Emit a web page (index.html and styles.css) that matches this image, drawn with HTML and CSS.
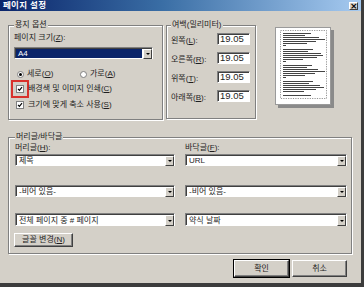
FILE: index.html
```html
<!DOCTYPE html>
<html lang="ko">
<head>
<meta charset="utf-8">
<title>페이지 설정</title>
<link rel="stylesheet" href="styles.css">
</head>
<body>
<div class="dialog">
  <div class="titlebar">
    <span class="title">페이지 설정</span>
    <span class="close">×</span>
  </div>
  <div class="main">
    <div class="top">
      <section class="group paper">
        <div class="gtitle">용지 옵션</div>
        <div class="lbl first">페이지 크기(<u>Z</u>):</div>
        <div class="select sel-a4"><span class="val">A4</span><span class="arrow"></span></div>
        <div class="radios">
          <label class="radio"><span class="rb on"></span><span>세로(<u>O</u>)</span></label>
          <label class="radio"><span class="rb"></span><span>가로(<u>A</u>)</span></label>
        </div>
        <label class="check check1"><span class="cb hl"><svg viewBox="0 0 8 8" width="6" height="6"><polyline points="1.3,3.8 3.2,5.8 6.7,1.6" fill="none" stroke="#000" stroke-width="1.5"/></svg></span><span>배경색 및 이미지 인쇄(<u>C</u>)</span></label>
        <label class="check check2"><span class="cb"><svg viewBox="0 0 8 8" width="6" height="6"><polyline points="1.3,3.8 3.2,5.8 6.7,1.6" fill="none" stroke="#000" stroke-width="1.5"/></svg></span><span>크기에 맞게 축소 사용(<u>S</u>)</span></label>
      </section>
      <section class="group margins">
        <div class="gtitle">여백(밀리미터)</div>
        <div class="mrows">
          <div class="mrow"><span>왼쪽(<u>L</u>):</span><span class="input">19.05</span></div>
          <div class="mrow"><span>오른쪽(<u>R</u>):</span><span class="input">19.05</span></div>
          <div class="mrow"><span>위쪽(<u>T</u>):</span><span class="input">19.05</span></div>
          <div class="mrow"><span>아래쪽(<u>B</u>):</span><span class="input">19.05</span></div>
        </div>
      </section>
      <div class="preview">
        <svg viewBox="0 0 56 78" width="56" height="78">
          <rect x="0.5" y="0.5" width="55" height="77" fill="#fff" stroke="#9a9a9a" stroke-width="1"/>
          <rect x="5.5" y="3.5" width="46" height="68" fill="none" stroke="#777" stroke-width="0.8" stroke-dasharray="1.2 1.2"/>
          <g fill="#444">
            <rect x="8" y="6" width="28" height="1"/>
            <rect x="8" y="8" width="22" height="1"/>
            <rect x="8" y="10" width="36" height="1"/>
            <rect x="8" y="12" width="42" height="1"/>
            <rect x="8" y="14" width="33" height="1"/>
            <rect x="8" y="16" width="24" height="1"/>
            <rect x="8" y="18" width="3" height="1"/>
            <rect x="8" y="22" width="30" height="1"/>
            <rect x="8" y="24" width="25" height="1"/>
            <rect x="8" y="26" width="38" height="1"/>
            <rect x="8" y="28" width="40" height="1"/>
            <rect x="8" y="30" width="34" height="1"/>
            <rect x="8" y="32" width="20" height="1"/>
            <rect x="8" y="34" width="3" height="1"/>
            <rect x="8" y="38" width="29" height="1"/>
            <rect x="8" y="40" width="24" height="1"/>
            <rect x="8" y="42" width="35" height="1"/>
            <rect x="8" y="44" width="42" height="1"/>
            <rect x="8" y="46" width="32" height="1"/>
            <rect x="8" y="48" width="22" height="1"/>
            <rect x="8" y="50" width="3" height="1"/>
            <rect x="8" y="54" width="30" height="1"/>
            <rect x="8" y="56" width="26" height="1"/>
            <rect x="8" y="58" width="37" height="1"/>
            <rect x="8" y="60" width="41" height="1"/>
            <rect x="8" y="62" width="33" height="1"/>
            <rect x="8" y="64" width="21" height="1"/>
            <rect x="8" y="68" width="28" height="1"/>
          </g>
        </svg>
      </div>
    </div>
    <section class="group hf">
      <div class="gtitle">머리글/바닥글</div>
      <div class="hfgrid">
        <div class="lbl">머리글(<u>H</u>):</div>
        <div class="lbl">바닥글(<u>F</u>):</div>
        <div class="select"><span class="val">제목</span><span class="arrow"></span></div>
        <div class="select"><span class="val">URL</span><span class="arrow"></span></div>
        <div class="select row2"><span class="val">-비어 있음-</span><span class="arrow"></span></div>
        <div class="select row2"><span class="val">-비어 있음-</span><span class="arrow"></span></div>
        <div class="select row3"><span class="val">전체 페이지 중 # 페이지</span><span class="arrow"></span></div>
        <div class="select row3"><span class="val">약식 날짜</span><span class="arrow"></span></div>
      </div>
      <button class="btn fontbtn">글꼴 변경(<u>N</u>)</button>
    </section>
    <div class="buttons">
      <button class="btn default">확인</button>
      <button class="btn">취소</button>
    </div>
  </div>
</div>
</body>
</html>
```
FILE: styles.css
```css
* { box-sizing: border-box; }
html, body { margin: 0; padding: 0; background: #d4d0c8; }
body {
  font-family: "Liberation Sans", "Noto Sans CJK KR", sans-serif;
  font-size: 8px;
  color: #1e1e1e;
}
u { text-decoration: underline; text-underline-offset: 1px; }

.dialog {
  width: 364px;
  height: 287px;
  background: #d4d0c8;
  border-right: 3px solid #3c3c3c;
  border-bottom: 4px solid #3c3c3c;
  display: flex;
  flex-direction: column;
  overflow: hidden;
}

.titlebar {
  height: 11px;
  flex: none;
  display: flex;
  align-items: center;
  justify-content: space-between;
  padding: 0 3px 0 3px;
  background: linear-gradient(to right, #0a246a 0%, #3a6ea5 45%, #a6caf0 100%);
}
.title {
  color: #fff;
  font-weight: bold;
  font-size: 8.5px;
  line-height: 11px;
  letter-spacing: 0.3px;
}
.close {
  width: 9px;
  height: 8px;
  background: #d4d0c8;
  border: 1px solid;
  border-color: #fff #404040 #404040 #fff;
  font-size: 9px;
  font-weight: bold;
  line-height: 6px;
  text-align: center;
  color: #000;
  font-family: "DejaVu Sans", sans-serif;
}

.main {
  flex: 1;
  padding: 14px 9px 0 8px;
  display: flex;
  flex-direction: column;
}

.top {
  display: flex;
  align-items: flex-start;
  flex: none;
}

.group {
  border: 1px solid #808080;
  box-shadow: inset 1px 1px 0 #fff, 1px 1px 0 #fff;
  display: flex;
  flex-direction: column;
  flex: none;
}
.gtitle {
  align-self: flex-start;
  margin-top: -6px;
  background: #d4d0c8;
  padding: 0 1px;
  height: 10px;
  line-height: 10px;
  white-space: nowrap;
}

.paper {
  width: 155px;
  height: 95px;
  padding: 0 5px;
}
.lbl {
  line-height: 10px;
  height: 10px;
  white-space: nowrap;
}
.paper .first { margin-top: 3px; }

.select {
  display: flex;
  height: 12px;
  background: #fff;
  border: 1px solid;
  border-color: #808080 #fff #fff #808080;
  box-shadow: inset 1px 1px 0 #404040;
  padding: 1px 0 0 1px;
}
.select .val {
  flex: 1;
  line-height: 10px;
  height: 10px;
  padding-left: 2px;
  white-space: nowrap;
}
.select .arrow {
  width: 9px;
  height: 10px;
  flex: none;
  background: #d4d0c8;
  border: 1px solid;
  border-color: #fff #404040 #404040 #fff;
  display: flex;
  align-items: center;
  justify-content: center;
}
.select .arrow::after {
  content: "";
  border-left: 2px solid transparent;
  border-right: 2px solid transparent;
  border-top: 2px solid #000;
}
.sel-a4 {
  margin-top: 4px;
  width: 139px;
}
.sel-a4 .val {
  background: #0a246a;
  color: #fff;
  margin-right: 1px;
  height: 9px;
  line-height: 9px;
}

.radios {
  display: grid;
  grid-template-columns: 63px auto;
  margin-top: 10px;
  height: 10px;
  padding-left: 3px;
}
.radio {
  display: flex;
  align-items: center;
  gap: 3px;
  line-height: 10px;
  white-space: nowrap;
}
.rb {
  width: 7px;
  height: 7px;
  border-radius: 50%;
  background: #fff;
  border: 1px solid #808080;
  display: flex;
  align-items: center;
  justify-content: center;
}
.rb.on::after {
  content: "";
  width: 3px;
  height: 3px;
  border-radius: 50%;
  background: #000;
}

.check {
  display: flex;
  align-items: center;
  gap: 4px;
  height: 10px;
  line-height: 10px;
  padding-left: 2px;
  white-space: nowrap;
}
.check1 { margin-top: 5px; }
.check2 { margin-top: 6px; }
.cb {
  width: 8px;
  height: 8px;
  background: #fff;
  border: 1px solid #808080;
  display: flex;
  align-items: center;
  justify-content: center;
}
.cb.hl {
  outline: 2px solid #d8322c;
  outline-offset: 3px;
}

.margins {
  width: 90px;
  height: 94px;
  margin-left: 3px;
  padding: 0 4px;
}
.mrows {
  display: flex;
  flex-direction: column;
  gap: 7px;
  margin-top: 3px;
}
.mrow {
  display: grid;
  grid-template-columns: 46px 33px;
  align-items: center;
  height: 12px;
  white-space: nowrap;
}
.input {
  height: 12px;
  background: #fff;
  border: 1px solid;
  border-color: #808080 #fff #fff #808080;
  box-shadow: inset 1px 1px 0 #404040;
  line-height: 10px;
  padding-left: 2px;
  font-size: 9.5px;
}

.preview {
  margin-left: 19px;
  margin-top: 2px;
  width: 56px;
  height: 78px;
  box-shadow: 3px 3px 0 #8a8a8a;
}
.preview svg { display: block; }

.hf {
  margin-top: 17px;
  height: 117px;
  width: 344px;
  padding: 0 4px 0 6px;
}
.hfgrid {
  display: grid;
  grid-template-columns: 160px 162px;
  column-gap: 10px;
  margin-top: 1px;
}
.hfgrid .select { margin-top: 1px; height: 12px; }
.hfgrid .row2 { margin-top: 19px; }
.hfgrid .row3 { margin-top: 16px; height: 13px; }
.hfgrid .row3 .val { line-height: 11px; height: 11px; }
.hfgrid .row3 .arrow { height: 11px; }

.btn {
  font-family: inherit;
  font-size: 8px;
  color: #1e1e1e;
  background: #d4d0c8;
  border: 1px solid;
  border-color: #fff #404040 #404040 #fff;
  box-shadow: inset -1px -1px 0 #808080;
  padding: 0;
  line-height: 10px;
}
.fontbtn {
  margin-top: 7px;
  width: 59px;
  height: 14px;
  align-self: flex-start;
  margin-left: -1px;
}

.buttons {
  display: flex;
  justify-content: flex-end;
  gap: 3px;
  margin-top: 6px;
  padding-right: 5px;
  flex: none;
}
.buttons .btn {
  width: 55px;
  height: 17px;
}
.buttons .default {
  outline: 1px solid #000;
}
```
